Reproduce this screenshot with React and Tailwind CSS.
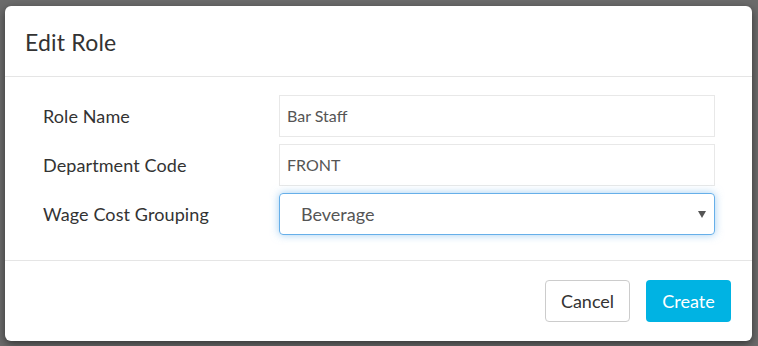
export default function App() {
  const font = { fontFamily: 'Lato, "Open Sans", sans-serif' };
  return (
    <div className="w-[758px] h-[346px] bg-[#6b6b6b] pt-[6px] pl-[5px] overflow-hidden" style={font}>
      <div className="w-[747px] h-[335px] bg-white rounded-[6px] shadow-[0_3px_9px_rgba(0,0,0,0.5)] flex flex-col">
        <div className="h-[70px] border-b border-[#e5e5e5] box-content flex items-center pl-[20px]">
          <h4 className="text-[23px] text-[#333] leading-none mt-[2px] tracking-[0.2px]">Edit Role</h4>
        </div>
        <div className="h-[183px] pt-[18px] pl-[38px] pr-[37px] flex flex-col gap-[7px]">
          <div className="flex items-center h-[42px]">
            <label className="w-[236px] text-[18px] text-[#333] tracking-[0.1px]">Role Name</label>
            <div className="flex-1 h-[42px] border border-[#e8e8e8] flex items-center px-[7px] text-[16px] text-[#555]">Bar Staff</div>
          </div>
          <div className="flex items-center h-[42px]">
            <label className="w-[236px] text-[18px] text-[#333] tracking-[0.1px]">Department Code</label>
            <div className="flex-1 h-[42px] border border-[#e8e8e8] flex items-center px-[7px] text-[16px] text-[#555]">FRONT</div>
          </div>
          <div className="flex items-center h-[42px]">
            <label className="w-[236px] text-[18px] text-[#333] tracking-[0.1px]">Wage Cost Grouping</label>
            <div className="flex-1 h-[42px] border border-[#66afe9] rounded-[4px] shadow-[0_0_8px_rgba(102,175,233,0.6)] flex items-center pl-[21px] pr-[8px] text-[18px] text-[#555]">
              <span className="flex-1">Beverage</span>
              <svg width="8" height="7" viewBox="0 0 8 7"><path d="M0 0H8L4 7Z" fill="#555" /></svg>
            </div>
          </div>
        </div>
        <div className="flex-1 border-t border-[#e5e5e5] flex justify-end items-start pt-[19px] pr-[21px] gap-[16px]">
          <button className="w-[85px] h-[42px] border border-[#ccc] rounded-[4px] bg-white text-[18px] text-[#333]">Cancel</button>
          <button className="w-[85px] h-[42px] rounded-[4px] bg-[#00b3e3] text-[18px] text-white">Create</button>
        </div>
      </div>
    </div>
  );
}
